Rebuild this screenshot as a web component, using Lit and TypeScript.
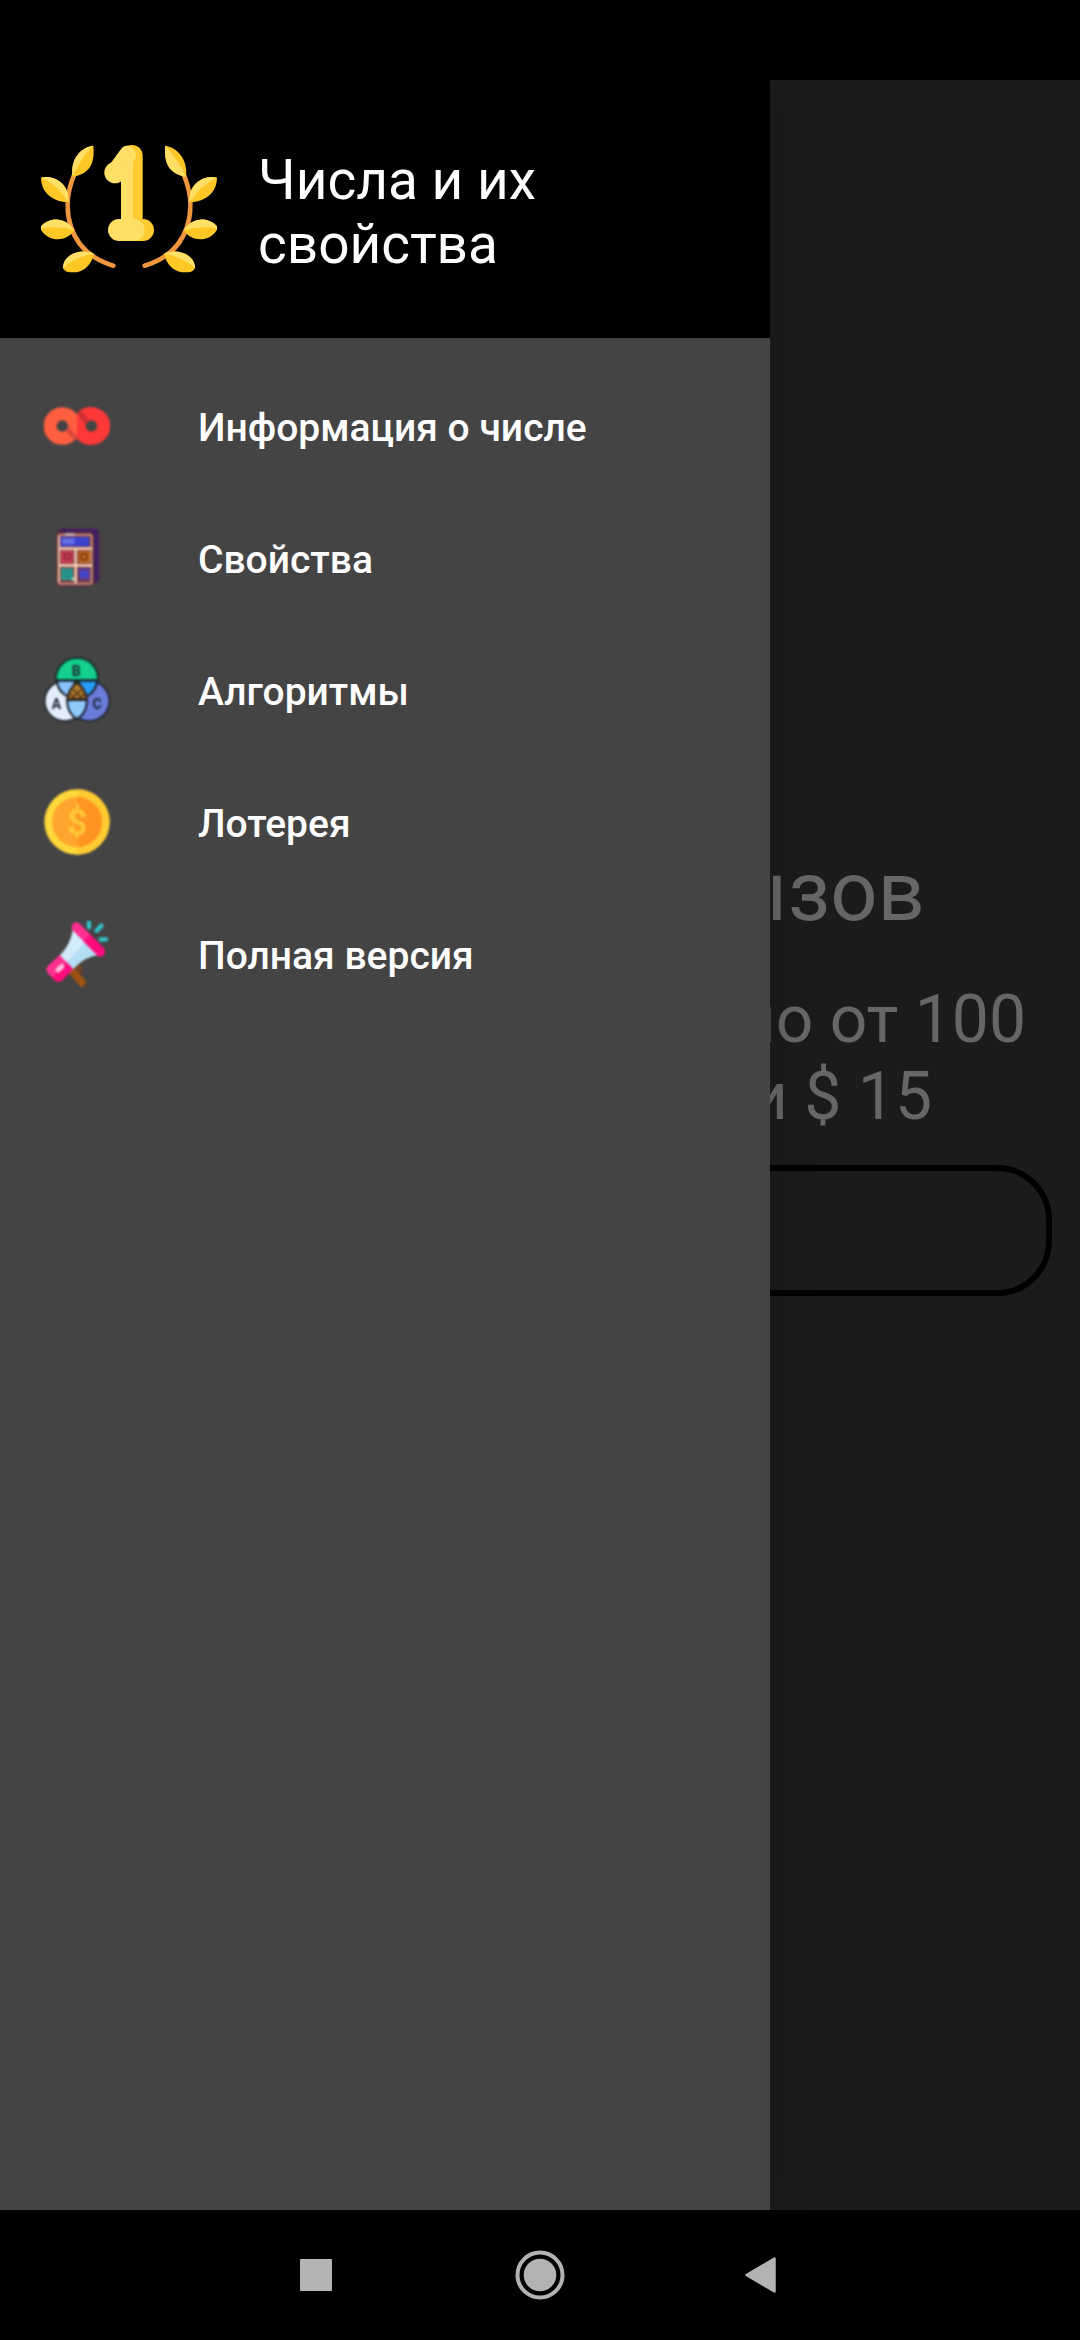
import { LitElement, html, css, svg } from "lit";
import { customElement } from "lit/decorators.js";

const infinityIcon = svg`
  <svg class="icon" viewBox="42 9 198 198" aria-hidden="true">
    <circle cx="184" cy="108" r="37" fill="none" stroke="#ff3838" stroke-width="39" />
    <circle cx="97" cy="108" r="37" fill="none" stroke="#ff5f3f" stroke-width="39" />
    <path d="M141 71 C150 58 165 51 184 51 L184 90 C172 90 166 97 165 108 C165 120 172 126 184 127 V165 C165 165 150 158 141 145 Z" fill="#ff3838" />
    <path d="M141 70 L151 60 L176 90 Q168 95 165 103 Z" fill="#cc2e36" />
    <path d="M117 110 L141 138 V146 L134 152 L108 124 Q115 119 117 110 Z" fill="#dc493a" />
  </svg>`;

const calculatorIcon = svg`
  <svg class="icon" viewBox="42 45 198 198" aria-hidden="true">
    <path d="M92 56 H192 Q207 56 207 71 V206 Q207 216 197 217 H186 V72 H82 Z" fill="#3d1d66" stroke="#5a3041" stroke-width="3" />
    <rect x="82" y="70" width="107" height="155" rx="9" fill="#7a3b3f" stroke="#5e2e31" stroke-width="7" />
    <rect x="86" y="74" width="99" height="147" rx="6" fill="none" stroke="#c78f83" stroke-width="6" />
    <rect x="92" y="81" width="86" height="28" fill="#3b43d0" />
    <rect x="97" y="85" width="36" height="17" fill="#6a6fe4" />
    <path d="M86 116 H186 M86 166 H186 M137 116 V218" stroke="#f3cdb5" stroke-width="8" />
    <path d="M87 78 V216" stroke="#edbfa9" stroke-width="6" />
    <rect x="94" y="124" width="34" height="34" fill="#e3405b" />
    <rect x="103" y="133" width="17" height="15" fill="none" stroke="#85283b" stroke-width="6" />
    <rect x="146" y="124" width="34" height="34" fill="#d57721" />
    <rect x="154" y="132" width="17" height="17" fill="none" stroke="#70380d" stroke-width="6" />
    <rect x="94" y="175" width="34" height="35" fill="#1fa596" />
    <path d="M104 183 H118 V202 H104 Z" fill="none" stroke="#307b7a" stroke-width="4" />
    <rect x="146" y="175" width="34" height="35" fill="#593c99" />
    <rect x="151" y="182" width="23" height="20" fill="#4245cc" />
    <rect x="106" y="71" width="26" height="5" fill="#e6e1f7" />
    <rect x="126" y="203" width="7" height="8" fill="#bff3ea" />
  </svg>`;

const vennIcon = svg`
  <svg class="icon" viewBox="42 51 198 198" aria-hidden="true">
    <circle cx="104" cy="183" r="60" fill="#e4effc" stroke="#1c242e" stroke-width="5" />
    <circle cx="178" cy="183" r="60" fill="#6b7bdb" stroke="#1c242e" stroke-width="5" />
    <path d="M78 121 C76 82 104 54 141 54 S206 82 204 121 Z" fill="#14d08c" stroke="#12332c" stroke-width="6" />
    <path d="M80 122 H138 L113 170 C96 161 82 143 80 122 Z" fill="#86c4fb" stroke="#17212d" stroke-width="6" />
    <path d="M202 122 H144 L169 170 C186 161 200 143 202 122 Z" fill="#279dfb" stroke="#17212d" stroke-width="6" />
    <path d="M111 180 H171 C171 204 160 226 141 238 C122 226 111 204 111 180 Z" fill="#8fcafd" stroke="#17212d" stroke-width="6" />
    <path d="M141 128 C158 140 168 158 170 178 H112 C114 158 124 140 141 128 Z" fill="#b07a30" stroke="#2b2419" stroke-width="6" />
    <path d="M127 147 L158 177 M119 160 L137 178 M155 147 L124 177 M164 160 L146 178" stroke="#4e3516" stroke-width="4" />
    <text class="mark" x="139" y="107" font-size="42">B</text>
    <text class="mark" x="79" y="206" font-size="42">A</text>
    <text class="mark" x="201" y="206" font-size="42">C</text>
  </svg>`;

const coinIcon = svg`
  <svg class="icon" viewBox="42 57 198 198" aria-hidden="true">
    <circle cx="141" cy="156" r="98" fill="#ffd83a" />
    <path d="M141 58 A98 98 0 0 1 141 254 Z" fill="#ffcb31" />
    <circle cx="141" cy="156" r="75" fill="#ffa52e" />
    <path d="M141 81 A75 75 0 0 1 141 231 Z" fill="#ff9420" />
    <text class="dollar" x="141" y="194" font-size="108">$</text>
  </svg>`;

const megaphoneIcon = svg`
  <svg class="icon" viewBox="42 63 198 198" aria-hidden="true">
    <path d="M116 217 L132 204 L166 240 Q170 247 163 256 Q156 264 149 259 Z" fill="#9e5213" />
    <path d="M135 205 L151 193 Q158 199 156 210 L149 223 Z" fill="#79431d" />
    <path d="M129 86 L206 165 C178 168 152 182 128 209 L88 167 C110 146 123 121 129 86 Z" fill="#d3ecfb" />
    <path d="M168 126 L206 165 C178 168 152 182 128 209 L108 188 Z" fill="#b5def3" />
    <path d="M128 72 Q137 62 148 70 L222 146 Q229 158 220 166 Q213 173 204 168 L128 91 Q121 82 128 72 Z" fill="#ff2f91" />
    <path d="M180 103 L222 146 Q229 158 220 166 Q213 173 204 168 L160 124 Z" fill="#ff0b7c" />
    <path d="M89 165 L129 207 L97 241 Q84 250 73 240 L54 220 Q44 208 54 197 Z" fill="#ff2f91" />
    <path d="M109 186 L129 207 L97 241 Q84 250 73 240 L67 233 Z" fill="#ff0b7c" />
    <path d="M84 210 L96 199" stroke="#ffc0df" stroke-width="15" stroke-linecap="round" />
    <path d="M177 66 V82 M200 92 L214 77 M212 118 H228" stroke="#32c5c9" stroke-width="13" stroke-linecap="round" />
  </svg>`;

const laurelLogo = svg`
  <svg class="logo" viewBox="63 46 528 393" role="img" aria-label="1">
    <g fill="none" stroke="#f0963e" stroke-width="14" stroke-linecap="round">
      <path d="M164 132 C120 232 140 366 280 408" />
      <path d="M490 132 C534 232 514 366 374 408" />
    </g>
    <g fill="#ffc726">
      <path d="M218 48 C182 54 150 88 158 141 C205 133 226 105 220 48 Z" />
      <path d="M63 144 C104 134 150 165 146 218 C98 216 64 190 63 144 Z" />
      <path d="M63 290 C90 260 138 262 163 302 C138 340 84 336 63 300 Z" />
      <path d="M222 373 C184 354 128 374 129 416 Q136 428 150 428 H170 C200 420 214 402 222 373 Z" />
      <path d="M436 48 C472 54 504 88 498 141 C452 133 430 105 436 48 Z" />
      <path d="M591 144 C550 134 504 165 508 218 C556 216 590 190 591 144 Z" />
      <path d="M591 290 C564 260 516 262 491 302 C516 340 570 336 591 300 Z" />
      <path d="M432 373 C470 354 526 374 525 416 Q518 428 504 428 H484 C454 420 440 402 432 373 Z" />
    </g>
    <g fill="#ffdf66">
      <path d="M218 48 C182 54 150 88 158 141 Q178 92 218 48 Z" />
      <path d="M63 144 C104 134 150 165 146 218 Q112 166 63 144 Z" />
      <path d="M63 290 C90 260 138 262 163 302 Q112 286 63 297 Z" />
      <path d="M222 373 C184 354 128 374 129 416 Q166 380 222 373 Z" />
      <path d="M436 48 C430 105 452 133 498 141 Q476 92 436 48 Z" />
      <path d="M591 144 C550 134 504 165 508 218 Q542 166 591 144 Z" />
      <path d="M591 290 C564 260 516 262 491 302 Q542 286 591 297 Z" />
      <path d="M432 373 C470 354 526 374 525 416 Q488 380 432 373 Z" />
    </g>
    <rect x="303" y="46" width="65" height="270" rx="32" fill="#ffcb30" />
    <rect x="290" y="268" width="112" height="66" rx="33" fill="#ffcb30" />
    <rect x="303" y="48" width="36" height="230" rx="16" fill="#ffdf66" />
    <rect x="264" y="268" width="110" height="66" rx="33" fill="#ffdf66" />
    <path d="M322 76 L284 129" stroke="#ffdf66" stroke-width="52" stroke-linecap="round" />
    <circle cx="285" cy="129" r="32" fill="#ffdf66" />
  </svg>`;

const menuItems = [
  { label: "Информация о числе", icon: infinityIcon },
  { label: "Свойства", icon: calculatorIcon },
  { label: "Алгоритмы", icon: vennIcon },
  { label: "Лотерея", icon: coinIcon },
  { label: "Полная версия", icon: megaphoneIcon },
];

@customElement("app-root")
export class AppRoot extends LitElement {
  static styles = css`
    :host {
      display: flex;
      flex-direction: column;
      min-height: 100vh;
      background: #000;
      color: #fff;
      font-family: Roboto, "Noto Sans", sans-serif;
    }
    .status {
      height: 80px;
    }
    .stage {
      flex: 1;
      display: grid;
      grid-template-columns: minmax(0, 1fr);
      overflow: hidden;
    }
    .page {
      grid-area: 1 / 1;
      display: flex;
      flex-direction: column;
      padding: 764px 28px 0;
      background: #1b1b1b;
      color: #666;
      text-align: right;
    }
    .heading {
      margin: 0 127px 41px 0;
      font-size: 83px;
      line-height: 96px;
      font-weight: 400;
    }
    .offer {
      margin: 0 26px 30px 0;
      font-size: 66px;
      line-height: 77px;
    }
    .price {
      display: block;
      padding-right: 94px;
    }
    .answer {
      box-sizing: border-box;
      width: 100%;
      height: 131px;
      padding: 0 55px;
      border: 6px solid #000;
      border-radius: 55px;
      background: transparent;
      color: #666;
      font: inherit;
      font-size: 55px;
      outline: none;
    }
    .drawer {
      grid-area: 1 / 1;
      z-index: 1;
      display: flex;
      flex-direction: column;
      width: 770px;
      max-width: 100%;
      background: #444;
      box-shadow: 0 0 44px rgba(0, 0, 0, 0.15);
    }
    .header {
      display: flex;
      align-items: flex-end;
      gap: 41px;
      padding: 65px 41px 62px;
      background: #000;
    }
    .logo {
      flex: none;
      width: 176px;
      height: 131px;
    }
    .title {
      flex: 1;
      margin: 0;
      font-size: 55px;
      line-height: 64px;
      font-weight: 400;
    }
    .menu {
      margin: 0;
      padding: 22px 0;
      list-style: none;
    }
    .item {
      display: flex;
      align-items: center;
      gap: 88px;
      height: 132px;
      padding: 0 44px;
      color: #fff;
      font-size: 39px;
      font-weight: 500;
      text-decoration: none;
    }
    .label {
      padding-top: 4px;
    }
    .icon {
      flex: none;
      width: 66px;
      height: 66px;
      filter: blur(1px);
    }
    .mark,
    .dollar {
      font-family: Roboto, sans-serif;
      font-weight: 700;
      text-anchor: middle;
      fill: #1c242e;
    }
    .dollar {
      fill: #ffc838;
    }
    .nav {
      display: flex;
      justify-content: center;
      align-items: center;
      gap: 174px;
      height: 130px;
    }
    .key {
      display: flex;
      width: 50px;
      height: 50px;
      padding: 0;
      border: 0;
      background: none;
    }
    .glyph {
      width: 50px;
      height: 50px;
      fill: #b3b3b3;
      stroke: #b3b3b3;
    }
  `;

  render() {
    return html`
      <div class="status"></div>
      <div class="stage">
        <main class="page">
          <h2 class="heading">вызов</h2>
          <p class="offer">число от 100 <span class="price">или $ 15</span></p>
          <input class="answer" type="text" aria-label="Число" />
        </main>
        <aside class="drawer">
          <header class="header">
            ${laurelLogo}
            <h1 class="title">Числа и их свойства</h1>
          </header>
          <nav>
            <ul class="menu">
              ${menuItems.map(
                (item) => html`<li>
                  <a class="item" href="#">${item.icon}<span class="label">${item.label}</span></a>
                </li>`
              )}
            </ul>
          </nav>
        </aside>
      </div>
      <footer class="nav">
        <button class="key" aria-label="Недавние">
          <svg class="glyph" viewBox="0 0 50 50">
            <rect x="9" y="9" width="32" height="32" rx="1" stroke="none" />
          </svg>
        </button>
        <button class="key" aria-label="Домой">
          <svg class="glyph" viewBox="0 0 50 50">
            <circle cx="25" cy="25" r="22.5" fill="none" stroke-width="4" />
            <circle cx="25" cy="25" r="16.3" stroke="none" />
          </svg>
        </button>
        <button class="key" aria-label="Назад">
          <svg class="glyph" viewBox="0 0 50 50">
            <path d="M7.500 25 L35.500 8.500 V41.500 Z" stroke-width="2.500" stroke-linejoin="round" />
          </svg>
        </button>
      </footer>
    `;
  }
}
